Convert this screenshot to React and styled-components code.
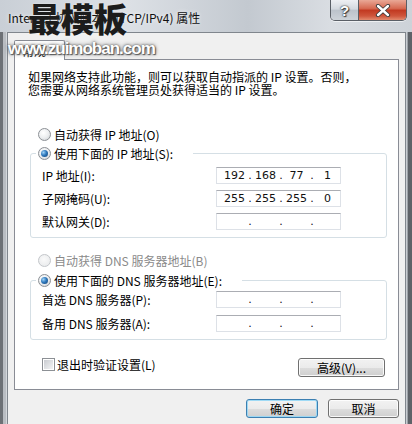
import styled, { createGlobalStyle } from "styled-components";

const GlobalStyle = createGlobalStyle`
  html, body { margin: 0; padding: 0; }
  body { width: 412px; height: 424px; overflow: hidden; background: #f0f0f0; }
  * { box-sizing: border-box; }
`;

const ui = `"Noto Sans CJK SC", "Liberation Sans", sans-serif`;

const Window = styled.div`
  position: relative;
  width: 412px;
  height: 424px;
  display: flex;
  flex-direction: column;
  font-family: ${ui};
  font-size: 12px;
  color: #000;
  background: #d5dae0;
  overflow: hidden;
`;

const TitleBar = styled.div`
  height: 32px;
  flex: none;
  display: flex;
  align-items: flex-start;
  padding-left: 8px;
  background: linear-gradient(to right, #c9cfd6 0%, #dde1e6 30%, #c3c9d0 60%, #d9dde2 80%, #cdd2d8 100%);
`;

const Title = styled.div`
  margin-top: 10px;
  line-height: 16px;
  font-size: 12px;
  color: #111;
  text-shadow: 0 0 4px rgba(255, 255, 255, 0.9);
`;

const Caption = styled.div`
  margin-left: auto;
  margin-right: 5px;
  display: flex;
  height: 21px;
  border: 1px solid #5a5f66;
  border-top: none;
  border-radius: 0 0 5px 5px;
  overflow: hidden;
  box-shadow: 0 1px 0 rgba(255, 255, 255, 0.6);
`;

const CapButton = styled.div`
  width: ${(p) => (p.$close ? 48 : 27)}px;
  display: flex;
  align-items: center;
  justify-content: center;
  border-left: ${(p) => (p.$close ? "1px solid #5a5f66" : "none")};
  background: ${(p) =>
    p.$close
      ? "linear-gradient(#e9a896 0%, #d66a52 42%, #c23a22 52%, #cf563c 80%, #e28a6e 100%)"
      : "linear-gradient(#eef0f3 0%, #d4d9df 45%, #bcc3cb 52%, #cdd3d9 100%)"};
  font-family: "Liberation Sans", sans-serif;
  font-weight: bold;
  font-size: 15px;
  color: #fff;
  text-shadow: 0 0 1px #333, 0 0 2px #333, 1px 1px 1px #444;
`;

const Body = styled.div`
  flex: 1;
  display: flex;
  min-height: 0;
`;

const Frame = styled.div`
  flex: none;
  width: ${(p) => (p.$right ? 6 : 7)}px;
  background: ${(p) =>
    p.$right
      ? "linear-gradient(to right, #c9cdd2 0 1px, #9da2a8 1px 2px, #5e6268 2px)"
      : "linear-gradient(to right, #6d7176 0 3px, #b9bdc2 3px 6px, #d4d8dc 6px)"};
`;

const Client = styled.div`
  flex: 1;
  display: flex;
  flex-direction: column;
  background: #f0f0f0;
  border: 1px solid #80868d;
  border-bottom: none;
  padding: 7px 6px 0 6px;
`;

const Tab = styled.div`
  position: relative;
  z-index: 1;
  width: 51px;
  height: 20px;
  margin-bottom: -1px;
  padding-left: 7px;
  display: flex;
  align-items: center;
  background: #fff;
  border: 1px solid #898c95;
  border-bottom: none;
  border-radius: 2px 2px 0 0;
`;

const Panel = styled.div`
  background: #fff;
  border: 1px solid #898c95;
  padding: 10px 11px 12px 13px;
  display: flex;
  flex-direction: column;
`;

const Desc = styled.p`
  margin: 0;
  line-height: 13px;
  white-space: nowrap;
`;

const RadioRow = styled.div`
  display: flex;
  align-items: center;
  gap: 3px;
  height: 16px;
  margin-top: ${(p) => p.$top || 0}px;
  padding-left: ${(p) => (p.$legend ? 0 : 10)}px;
  color: ${(p) => (p.$disabled ? "#8a8a8a" : "#000")};
  white-space: nowrap;
`;

const Radio = styled.span`
  flex: none;
  width: 13px;
  height: 13px;
  border-radius: 50%;
  border: 1px solid ${(p) => (p.$disabled ? "#c3c6ca" : "#8c9095")};
  background: ${(p) =>
    p.$disabled
      ? "radial-gradient(circle at 45% 40%, #fafafa, #e6e8ea)"
      : "radial-gradient(circle at 40% 35%, #ffffff 0%, #eceef0 50%, #c9ccd0 100%)"};
  display: flex;
  align-items: center;
  justify-content: center;
  &::after {
    content: "";
    display: ${(p) => (p.$checked ? "block" : "none")};
    width: 7px;
    height: 7px;
    border-radius: 50%;
    background: radial-gradient(circle at 35% 35%, #9fd3f7 0%, #2f79bd 45%, #123f70 100%);
  }
`;

const Group = styled.fieldset`
  margin: ${(p) => p.$top}px 0 0 2px;
  padding: 0 0 7px 5px;
  border: 1px solid #d5dfe5;
  border-radius: 3px;
  min-inline-size: 0;
`;

const Legend = styled.legend`
  padding: 0 20px 0 2px;
`;

const Rows = styled.div`
  display: grid;
  grid-template-columns: 174px 125px;
  row-gap: ${(p) => p.$gap}px;
  margin-top: ${(p) => p.$top}px;
  padding-left: 6px;
`;

const Label = styled.span`
  height: 17px;
  display: flex;
  align-items: center;
  white-space: nowrap;
`;

const IpBox = styled.div`
  height: 17px;
  display: flex;
  align-items: center;
  padding-left: 5px;
  border: 1px solid #dde1e7;
  border-top-color: #abadb3;
  background: #fff;
  font-family: "DejaVu Sans", sans-serif;
  font-size: 11px;
  color: #111;
`;

const Octet = styled.span`
  width: 25px;
  text-align: center;
`;

const Dot = styled.span`
  width: 6px;
  text-align: center;
`;

const BottomRow = styled.div`
  display: flex;
  align-items: flex-start;
  justify-content: space-between;
  margin-top: 18px;
  padding: 0 2px 0 14px;
`;

const CheckRow = styled.div`
  display: flex;
  align-items: center;
  gap: 2px;
  height: 13px;
`;

const Check = styled.span`
  width: 13px;
  height: 13px;
  border: 1px solid #8c9095;
  background: #fff;
  padding: 1px;
  &::after {
    content: "";
    display: block;
    width: 100%;
    height: 100%;
    background: linear-gradient(135deg, #c9ccd1, #f3f4f5);
  }
`;

const Button = styled.button`
  width: ${(p) => p.$w}px;
  height: 19px;
  padding: 0;
  font-family: ${ui};
  font-size: 12px;
  color: #000;
  border-radius: 3px;
  border: 1px solid ${(p) => (p.$default ? "#3c7fb1" : "#707070")};
  background: linear-gradient(#f2f2f2 0%, #ebebeb 50%, #dddddd 51%, #cfcfcf 100%);
  box-shadow: inset 0 0 0 1px ${(p) => (p.$default ? "rgba(150, 215, 245, 0.9)" : "rgba(255, 255, 255, 0.85)")};
  display: flex;
  align-items: center;
  justify-content: center;
`;

const Footer = styled.div`
  display: flex;
  justify-content: flex-end;
  gap: 10px;
  margin-top: 9px;
`;

const MarkBig = styled.div`
  position: absolute;
  z-index: 2;
  left: 28px;
  top: 2px;
  font-family: "Noto Sans CJK SC", sans-serif;
  font-weight: 900;
  font-size: 33px;
  line-height: 33px;
  color: #1c1c1c;
  text-shadow: 0 0 2px rgba(255, 255, 255, 0.5);
  pointer-events: none;
`;

const MarkUrl = styled.div`
  position: absolute;
  z-index: 2;
  left: 8px;
  top: 40px;
  font-family: "Liberation Sans", sans-serif;
  font-weight: bold;
  font-size: 17px;
  line-height: 17px;
  letter-spacing: -1px;
  color: #fff;
  text-shadow: 0 0 2px #555, 0 0 4px #666, 1px 1px 1px #555;
  pointer-events: none;
`;

function Ip({ value }) {
  const parts = value ? value.split(".") : ["", "", "", ""];
  return (
    <IpBox>
      {parts.map((p, i) => (
        <span key={i} style={{ display: "contents" }}>
          <Octet>{p}</Octet>
          {i < 3 && <Dot>.</Dot>}
        </span>
      ))}
    </IpBox>
  );
}

function CloseIcon() {
  return (
    <svg width="16" height="13" viewBox="0 0 16 13">
      <path d="M3 2 L13 11 M13 2 L3 11" stroke="#3b3b3b" strokeWidth="4.2" strokeLinecap="round" />
      <path d="M3 2 L13 11 M13 2 L3 11" stroke="#fff" strokeWidth="2.4" strokeLinecap="round" />
    </svg>
  );
}

export default function App() {
  return (
    <Window>
      <GlobalStyle />
      <TitleBar>
        <Title>Internet 协议版本 4 (TCP/IPv4) 属性</Title>
        <Caption>
          <CapButton>?</CapButton>
          <CapButton $close>
            <CloseIcon />
          </CapButton>
        </Caption>
      </TitleBar>

      <Body>
        <Frame />
        <Client>
          <Tab>常规</Tab>
          <Panel>
            <Desc>
              如果网络支持此功能，则可以获取自动指派的 IP 设置。否则，
              <br />
              您需要从网络系统管理员处获得适当的 IP 设置。
            </Desc>

            <RadioRow $top={30}>
              <Radio />
              自动获得 IP 地址(O)
            </RadioRow>

            <Group $top={3}>
              <Legend>
                <RadioRow $legend>
                  <Radio $checked />
                  使用下面的 IP 地址(S):
                </RadioRow>
              </Legend>
              <Rows $top={6} $gap={6}>
                <Label>IP 地址(I):</Label>
                <Ip value="192.168.77.1" />
                <Label>子网掩码(U):</Label>
                <Ip value="255.255.255.0" />
                <Label>默认网关(D):</Label>
                <Ip />
              </Rows>
            </Group>

            <RadioRow $top={14} $disabled>
              <Radio $disabled />
              自动获得 DNS 服务器地址(B)
            </RadioRow>

            <Group $top={4}>
              <Legend>
                <RadioRow $legend>
                  <Radio $checked />
                  使用下面的 DNS 服务器地址(E):
                </RadioRow>
              </Legend>
              <Rows $top={3} $gap={7}>
                <Label>首选 DNS 服务器(P):</Label>
                <Ip />
                <Label>备用 DNS 服务器(A):</Label>
                <Ip />
              </Rows>
            </Group>

            <BottomRow>
              <CheckRow>
                <Check />
                退出时验证设置(L)
              </CheckRow>
              <Button $w={87}>高级(V)...</Button>
            </BottomRow>
          </Panel>

          <Footer>
            <Button $w={72} $default>确定</Button>
            <Button $w={71}>取消</Button>
          </Footer>
        </Client>
        <Frame $right />
      </Body>

      <MarkBig>最模板</MarkBig>
      <MarkUrl>www.zuimoban.com</MarkUrl>
    </Window>
  );
}
